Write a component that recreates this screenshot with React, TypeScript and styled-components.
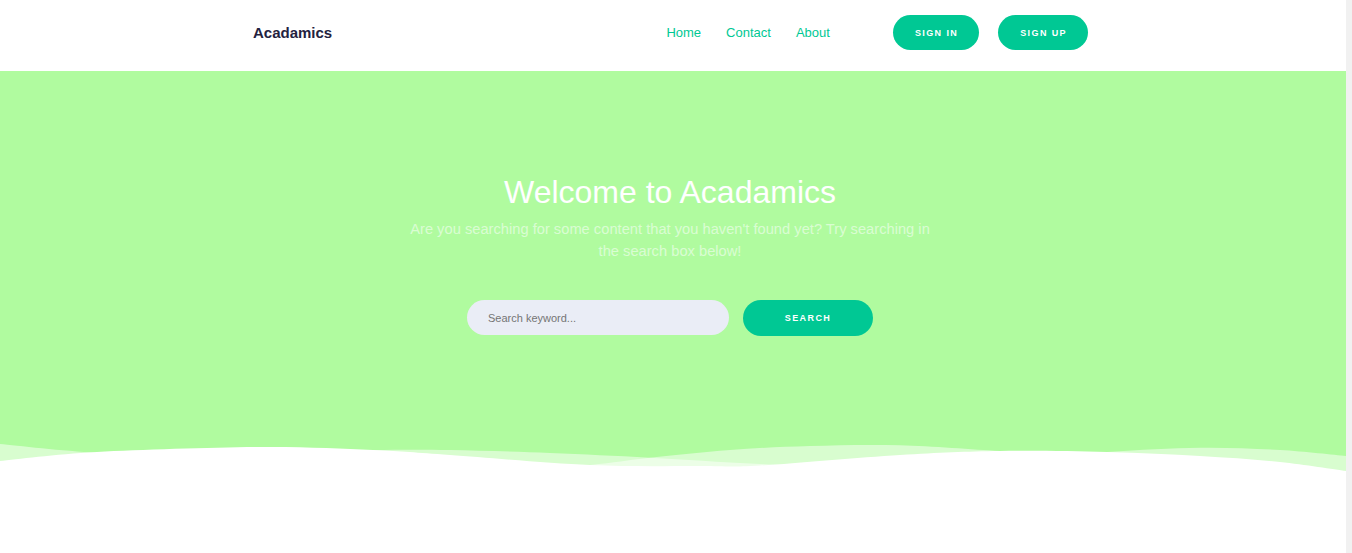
import React from 'react';
import styled, { createGlobalStyle } from 'styled-components';

const GlobalStyles = createGlobalStyle`
  html {
    background: #f1f1f1;
  }

  body {
    margin: 0 6px 0 0;
    padding: 0;
    background: #fff;
    font-family: 'Liberation Sans', Arial, sans-serif;
  }

  * {
    box-sizing: border-box;
  }
`;

const teal = '#00c894';
const green = '#b0fb9f';

const Header = styled.header`
  background: #fff;
`;

const Container = styled.div`
  max-width: 870px;
  margin: 0 auto;
  padding: 0 15px;
`;

const NavBar = styled.nav`
  display: flex;
  align-items: center;
  justify-content: space-between;
  padding: 15px 5px 21px 0;
`;

const Brand = styled.a`
  font-size: 15px;
  font-weight: 700;
  color: #24223f;
  text-decoration: none;
`;

const RightSide = styled.div`
  display: flex;
  align-items: center;
`;

const Links = styled.ul`
  display: flex;
  gap: 25px;
  list-style: none;
  margin: -1px 63px 0 0;
  padding: 0;
`;

const NavLink = styled.a`
  font-size: 13px;
  color: ${teal};
  text-decoration: none;
`;

const Buttons = styled.div`
  display: flex;
  gap: 19px;
`;

type PillProps = { $width?: number; $height?: number };

const Pill = styled.button<PillProps>`
  display: inline-flex;
  align-items: center;
  justify-content: center;
  height: ${p => p.$height || 35}px;
  ${p => (p.$width ? `width: ${p.$width}px;` : 'padding: 0 21px 0 22px;')}
  border: 0;
  border-radius: 20px;
  background: ${teal};
  color: #fff;
  font-family: 'Liberation Sans', Arial, sans-serif;
  font-size: 9px;
  font-weight: 700;
  letter-spacing: 1.4px;
  cursor: pointer;
`;

const Hero = styled.section`
  background: ${green};
  padding-top: 102px;
`;

const HeroBody = styled.div`
  text-align: center;
  padding: 0 6px 104px 0;
`;

const Title = styled.h1`
  margin: 0;
  font-size: 32px;
  line-height: 38px;
  font-weight: 400;
  color: #fff;
`;

const Lead = styled.p`
  max-width: 535px;
  margin: 7px auto 0;
  font-size: 14.7px;
  line-height: 22px;
  color: rgba(255, 255, 255, 0.55);
`;

const SearchForm = styled.form`
  display: flex;
  justify-content: center;
  align-items: flex-start;
  gap: 14px;
  margin-top: 38px;
`;

const SearchInput = styled.input`
  width: 262px;
  height: 35px;
  border: 0;
  border-radius: 18px;
  padding: 0 21px;
  background: #eaedf6;
  font-family: 'Liberation Sans', Arial, sans-serif;
  font-size: 11px;
  color: #333;
  outline: none;

  ::placeholder {
    color: #737390;
  }
`;

const WaveSvg = styled.svg`
  display: block;
  width: 100%;
  height: 40px;
`;

const Below = styled.section`
  height: 1620px;
  background: #fff;
`;

type Pt = [number, number];

// smooth curve through the points, closed down to the bottom edge
const wavePath = (pts: Pt[], bottom: number) => {
  let d = `M${pts[0][0]},${pts[0][1]}`;
  for (let i = 0; i < pts.length - 1; i++) {
    const p0 = pts[i - 1] || pts[i];
    const p1 = pts[i];
    const p2 = pts[i + 1];
    const p3 = pts[i + 2] || p2;
    const c1x = p1[0] + (p2[0] - p0[0]) / 6;
    const c1y = p1[1] + (p2[1] - p0[1]) / 6;
    const c2x = p2[0] - (p3[0] - p1[0]) / 6;
    const c2y = p2[1] - (p3[1] - p1[1]) / 6;
    d += ` C${c1x},${c1y} ${c2x},${c2y} ${p2[0]},${p2[1]}`;
  }
  const last = pts[pts.length - 1];
  return `${d} L${last[0]},${bottom} L0,${bottom} Z`;
};

const backWave: Pt[] = [
  [0, 4], [97, 12.7], [200, 13.5], [300, 11.5], [373, 10], [450, 10],
  [550, 13], [650, 17.7], [760, 24], [900, 30], [1000, 22], [1107, 12],
  [1200, 7.7], [1280, 10], [1346, 16],
];

const midWave: Pt[] = [
  [0, 40], [300, 40], [500, 33], [590, 25], [650, 17.7], [730, 10],
  [810, 6], [900, 5.3], [1000, 11], [1060, 13], [1107, 16], [1200, 25],
  [1346, 40],
];

const frontWave: Pt[] = [
  [0, 21], [97, 12], [260, 7], [373, 10], [450, 15], [590, 25], [700, 26],
  [760, 25.5], [900, 15], [1000, 11], [1107, 12], [1200, 16], [1280, 22],
  [1346, 31],
];

const Waves = () => (
  <WaveSvg viewBox="0 0 1346 40" preserveAspectRatio="none">
    <path d={wavePath(backWave, 40)} fill="#fff" fillOpacity={0.5} />
    <path d={wavePath(midWave, 40)} fill="#fff" fillOpacity={0.5} />
    <path d={wavePath(frontWave, 40)} fill="#fff" />
    <rect x="0" y="36" width="1346" height="4" fill="#fff" />
  </WaveSvg>
);

export default function App() {
  return (
    <>
      <GlobalStyles />
      <Header>
        <Container>
          <NavBar>
            <Brand href="#">Acadamics</Brand>
            <RightSide>
              <Links>
                <li><NavLink href="#">Home</NavLink></li>
                <li><NavLink href="#">Contact</NavLink></li>
                <li><NavLink href="#">About</NavLink></li>
              </Links>
              <Buttons>
                <Pill>SIGN IN</Pill>
                <Pill>SIGN UP</Pill>
              </Buttons>
            </RightSide>
          </NavBar>
        </Container>
      </Header>
      <Hero>
        <HeroBody>
          <Title>Welcome to Acadamics</Title>
          <Lead>
            Are you searching for some content that you haven't found yet? Try
            searching in the search box below!
          </Lead>
          <SearchForm onSubmit={e => e.preventDefault()}>
            <SearchInput type="text" placeholder="Search keyword..." />
            <Pill type="submit" $width={130} $height={36}>
              SEARCH
            </Pill>
          </SearchForm>
        </HeroBody>
        <Waves />
      </Hero>
      <Below />
    </>
  );
}
